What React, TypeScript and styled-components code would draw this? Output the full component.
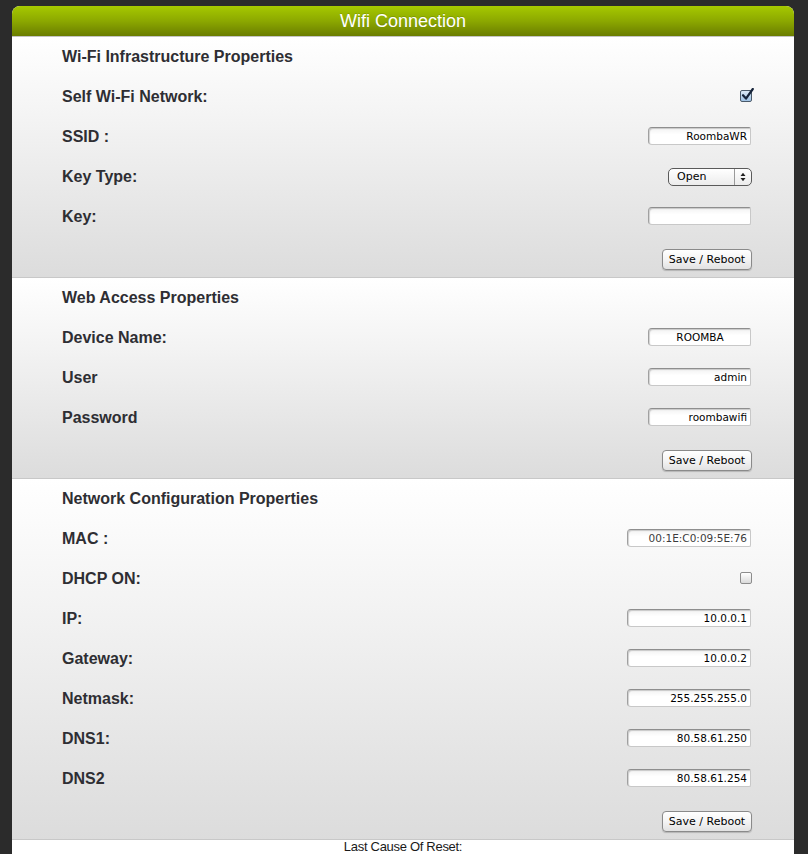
import styled, { createGlobalStyle } from 'styled-components';

const GlobalStyle = createGlobalStyle`
  html, body {
    margin: 0;
    padding: 0;
    background: #2b2b2b;
    font-family: 'Liberation Sans', Arial, sans-serif;
  }
`;

const Page = styled.div`
  padding: 6px 14px 0 12px;
`;

const Panel = styled.div`
  width: 782px;
  border-radius: 8px 8px 0 0;
  overflow: hidden;
  background: #fff;
`;

const Header = styled.div`
  height: 30px;
  line-height: 31px;
  border-bottom: 1px solid #c4c4c4;
  background: linear-gradient(to bottom, #a6c900 0%, #8ca800 50%, #6a7d00 100%);
  color: #fff;
  font-size: 18px;
  text-align: center;
  text-shadow: 0 -1px 0 rgba(0, 0, 0, 0.15);
`;

const Section = styled.div`
  padding: 0 42px 0 50px;
  background: linear-gradient(to bottom, #ffffff 0%, #f3f3f3 35%, #dcdcdc 100%);
  border-bottom: 1px solid #c8c8c8;
`;

const Heading = styled.div`
  height: 39px;
  display: flex;
  align-items: center;
  font-size: 16px;
  font-weight: bold;
  color: #2e2e33;
`;

const Row = styled.div`
  height: 40px;
  display: flex;
  align-items: center;
  justify-content: space-between;
`;

const Label = styled.span`
  padding-top: 1px;
  font-size: 16px;
  font-weight: bold;
  color: #2e2e33;
`;

const TextInput = styled.input<{ $w: number; $align?: 'right' | 'center'; $muted?: boolean }>`
  box-sizing: border-box;
  width: ${(p) => p.$w}px;
  height: 18px;
  margin-right: 1px;
  padding: 0 3px 0 4px;
  border: 1px solid #c8c8c8;
  border-top: 1px solid #8e8e8e;
  border-left: 1px solid #a0a0a0;
  border-radius: 4px 2px 2px 4px;
  box-shadow: inset 1px 1px 1px rgba(0, 0, 0, 0.18);
  background: linear-gradient(to bottom, #f2f2f2 0%, #ffffff 40%);
  font-family: 'DejaVu Sans', sans-serif;
  font-size: 10.5px;
  color: ${(p) => (p.$muted ? '#3c3c3c' : '#000')};
  text-align: ${(p) => p.$align ?? 'right'};
  outline: none;
`;

const SelectBox = styled.div`
  box-sizing: border-box;
  width: 84px;
  height: 18px;
  margin-top: 2px;
  display: flex;
  border: 1px solid #5a5a5a;
  border-radius: 5px;
  background: linear-gradient(to bottom, #ffffff 0%, #ececec 100%);
  font-family: 'DejaVu Sans', sans-serif;
  font-size: 11px;
  color: #000;
  overflow: hidden;
`;

const SelectText = styled.span`
  flex: 1;
  padding-left: 8px;
  line-height: 16px;
`;

const SelectArrows = styled.span`
  width: 16px;
  border-left: 1px solid #9a9a9a;
  display: flex;
  align-items: center;
  justify-content: center;
`;

const ButtonRow = styled.div`
  display: flex;
  justify-content: flex-end;
  padding: 13px 0 7px;
`;

const Button = styled.button`
  box-sizing: border-box;
  width: 90px;
  height: 21px;
  padding: 0;
  border: 1px solid #8a8a8a;
  border-radius: 4px;
  background: linear-gradient(to bottom, #ffffff 0%, #f4f4f4 50%, #e2e2e2 100%);
  box-shadow: 0 1px 1px rgba(0, 0, 0, 0.18);
  font-family: 'DejaVu Sans', sans-serif;
  font-size: 11px;
  color: #000;
`;

const Box = styled.span<{ $checked?: boolean }>`
  box-sizing: border-box;
  position: relative;
  width: 12px;
  height: 12px;
  border: 1px solid ${(p) => (p.$checked ? '#4a5a6a' : '#8c8c8c')};
  border-radius: 2px;
  background: ${(p) =>
    p.$checked
      ? 'linear-gradient(to bottom, #dbe9f6 0%, #9fc2e4 100%)'
      : 'linear-gradient(to bottom, #ffffff 0%, #dadada 100%)'};
  svg {
    position: absolute;
    left: 0;
    top: -3px;
  }
`;

const Footer = styled.div`
  height: 14px;
  background: #fff;
  text-align: center;
  font-size: 13px;
  line-height: 13px;
  color: #1a1a1a;
  letter-spacing: -0.3px;
`;

function Check({ checked }: { checked?: boolean }) {
  return (
    <Box $checked={checked}>
      {checked && (
        <svg width="13" height="13" viewBox="0 0 13 13">
          <path
            d="M2 7.2 L5 10.6 L11.8 1"
            fill="none"
            stroke="#16243a"
            strokeWidth="2.2"
            strokeLinecap="round"
            strokeLinejoin="round"
          />
        </svg>
      )}
    </Box>
  );
}

function Select({ value }: { value: string }) {
  return (
    <SelectBox>
      <SelectText>{value}</SelectText>
      <SelectArrows>
        <svg width="6" height="10" viewBox="0 0 6 10">
          <path d="M0.5 4 L3 0.8 L5.5 4 Z M0.5 6 L3 9.2 L5.5 6 Z" fill="#222" />
        </svg>
      </SelectArrows>
    </SelectBox>
  );
}

type Field = {
  label: string;
  kind: 'text' | 'check' | 'select';
  value?: string;
  checked?: boolean;
  width?: number;
  align?: 'right' | 'center';
  muted?: boolean;
};

const sections: { title: string; fields: Field[] }[] = [
  {
    title: 'Wi-Fi Infrastructure Properties',
    fields: [
      { label: 'Self Wi-Fi Network:', kind: 'check', checked: true },
      { label: 'SSID :', kind: 'text', value: 'RoombaWR', width: 103 },
      { label: 'Key Type:', kind: 'select', value: 'Open' },
      { label: 'Key:', kind: 'text', value: '', width: 103 },
    ],
  },
  {
    title: 'Web Access Properties',
    fields: [
      { label: 'Device Name:', kind: 'text', value: 'ROOMBA', width: 103, align: 'center' },
      { label: 'User', kind: 'text', value: 'admin', width: 103 },
      { label: 'Password', kind: 'text', value: 'roombawifi', width: 103 },
    ],
  },
  {
    title: 'Network Configuration Properties',
    fields: [
      { label: 'MAC :', kind: 'text', value: '00:1E:C0:09:5E:76', width: 124, muted: true },
      { label: 'DHCP ON:', kind: 'check', checked: false },
      { label: 'IP:', kind: 'text', value: '10.0.0.1', width: 124 },
      { label: 'Gateway:', kind: 'text', value: '10.0.0.2', width: 124 },
      { label: 'Netmask:', kind: 'text', value: '255.255.255.0', width: 124 },
      { label: 'DNS1:', kind: 'text', value: '80.58.61.250', width: 124 },
      { label: 'DNS2', kind: 'text', value: '80.58.61.254', width: 124 },
    ],
  },
];

function renderControl(f: Field) {
  if (f.kind === 'check') return <Check checked={f.checked} />;
  if (f.kind === 'select') return <Select value={f.value ?? ''} />;
  return (
    <TextInput
      $w={f.width ?? 103}
      $align={f.align}
      $muted={f.muted}
      defaultValue={f.value}
      readOnly={f.muted}
    />
  );
}

export default function App() {
  return (
    <>
      <GlobalStyle />
      <Page>
        <Panel>
          <Header>Wifi Connection</Header>
          {sections.map((s) => (
            <Section key={s.title}>
              <Heading>{s.title}</Heading>
              {s.fields.map((f) => (
                <Row key={f.label}>
                  <Label>{f.label}</Label>
                  {renderControl(f)}
                </Row>
              ))}
              <ButtonRow>
                <Button>Save / Reboot</Button>
              </ButtonRow>
            </Section>
          ))}
          <Footer>Last Cause Of Reset:</Footer>
        </Panel>
      </Page>
    </>
  );
}
